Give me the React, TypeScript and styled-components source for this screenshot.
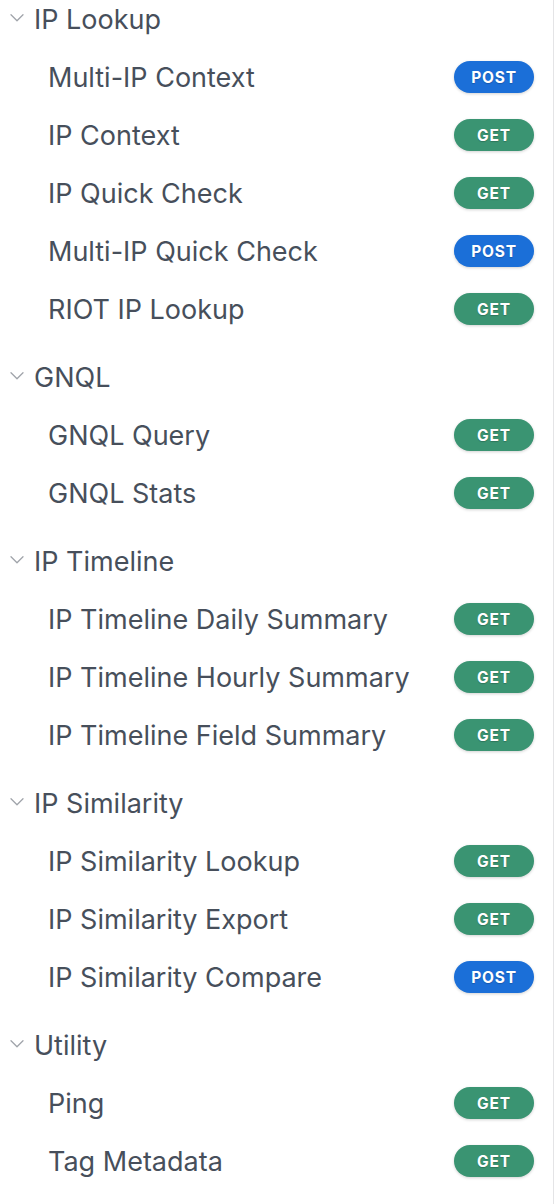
import { createGlobalStyle, styled } from "styled-components";

type Method = "GET" | "POST";

interface Endpoint {
  name: string;
  method: Method;
}

interface Section {
  title: string;
  items: Endpoint[];
}

const sections: Section[] = [
  {
    title: "IP Lookup",
    items: [
      { name: "Multi-IP Context", method: "POST" },
      { name: "IP Context", method: "GET" },
      { name: "IP Quick Check", method: "GET" },
      { name: "Multi-IP Quick Check", method: "POST" },
      { name: "RIOT IP Lookup", method: "GET" },
    ],
  },
  {
    title: "GNQL",
    items: [
      { name: "GNQL Query", method: "GET" },
      { name: "GNQL Stats", method: "GET" },
    ],
  },
  {
    title: "IP Timeline",
    items: [
      { name: "IP Timeline Daily Summary", method: "GET" },
      { name: "IP Timeline Hourly Summary", method: "GET" },
      { name: "IP Timeline Field Summary", method: "GET" },
    ],
  },
  {
    title: "IP Similarity",
    items: [
      { name: "IP Similarity Lookup", method: "GET" },
      { name: "IP Similarity Export", method: "GET" },
      { name: "IP Similarity Compare", method: "POST" },
    ],
  },
  {
    title: "Utility",
    items: [
      { name: "Ping", method: "GET" },
      { name: "Tag Metadata", method: "GET" },
    ],
  },
];

const GlobalStyle = createGlobalStyle`
  html, body {
    margin: 0;
    padding: 0;
    background: #ffffff;
  }
  body {
    font-family: Inter, "Noto Sans", "Liberation Sans", sans-serif;
    -webkit-font-smoothing: antialiased;
  }
`;

// small disclosure chevron, pointing down (expanded)
const Chevron = () => (
  <svg width="14" height="14" viewBox="0 0 14 14" fill="none">
    <path d="M1 2.8 L7 8.8 L13 2.8" stroke="#a0a4aa" strokeWidth="1.3" strokeLinecap="round" strokeLinejoin="round" />
  </svg>
);

const App = () => {
  return (
    <>
      <GlobalStyle />
      <Sidebar>
        {sections.map((section) => (
          <Group key={section.title}>
            <GroupHeader>
              <ChevronWrap>
                <Chevron />
              </ChevronWrap>
              {section.title}
            </GroupHeader>
            <ItemList>
              {section.items.map((item) => (
                <Item key={item.name}>
                  <ItemName>{item.name}</ItemName>
                  <Badge $method={item.method}>{item.method}</Badge>
                </Item>
              ))}
            </ItemList>
          </Group>
        ))}
      </Sidebar>
    </>
  );
};

const Sidebar = styled.nav`
  width: 554px;
  min-height: 1204px;
  box-sizing: border-box;
  border-right: 1px solid #e4e4e6;
  display: flex;
  flex-direction: column;
  gap: 20px;
  padding-right: 19px;
`;

const Group = styled.section`
  display: flex;
  flex-direction: column;
`;

const GroupHeader = styled.div`
  height: 38px;
  display: flex;
  align-items: center;
  font-size: 27px;
  color: #474f5b;
  margin-bottom: 10px;
`;

const ChevronWrap = styled.span`
  display: flex;
  width: 34px;
  padding-left: 10px;
  box-sizing: border-box;
`;

const ItemList = styled.ul`
  list-style: none;
  margin: 0;
  padding: 0;
`;

const Item = styled.li`
  height: 58px;
  display: flex;
  align-items: center;
  justify-content: space-between;
  padding-left: 48px;
`;

const ItemName = styled.span`
  font-size: 27px;
  color: #474f5b;
`;

const Badge = styled.span<{ $method: Method }>`
  width: 80px;
  height: 32px;
  border-radius: 16px;
  display: flex;
  align-items: center;
  justify-content: center;
  font-size: 15.5px;
  font-weight: 700;
  letter-spacing: 0.8px;
  color: #ffffff;
  background: ${(p) => (p.$method === "POST" ? "#1b6fd8" : "#3a9472")};
  box-shadow: 0 1px 3px rgba(0, 0, 0, 0.18);
  text-shadow: 0 1px 1px rgba(0, 0, 0, 0.2);
`;

export default App;
